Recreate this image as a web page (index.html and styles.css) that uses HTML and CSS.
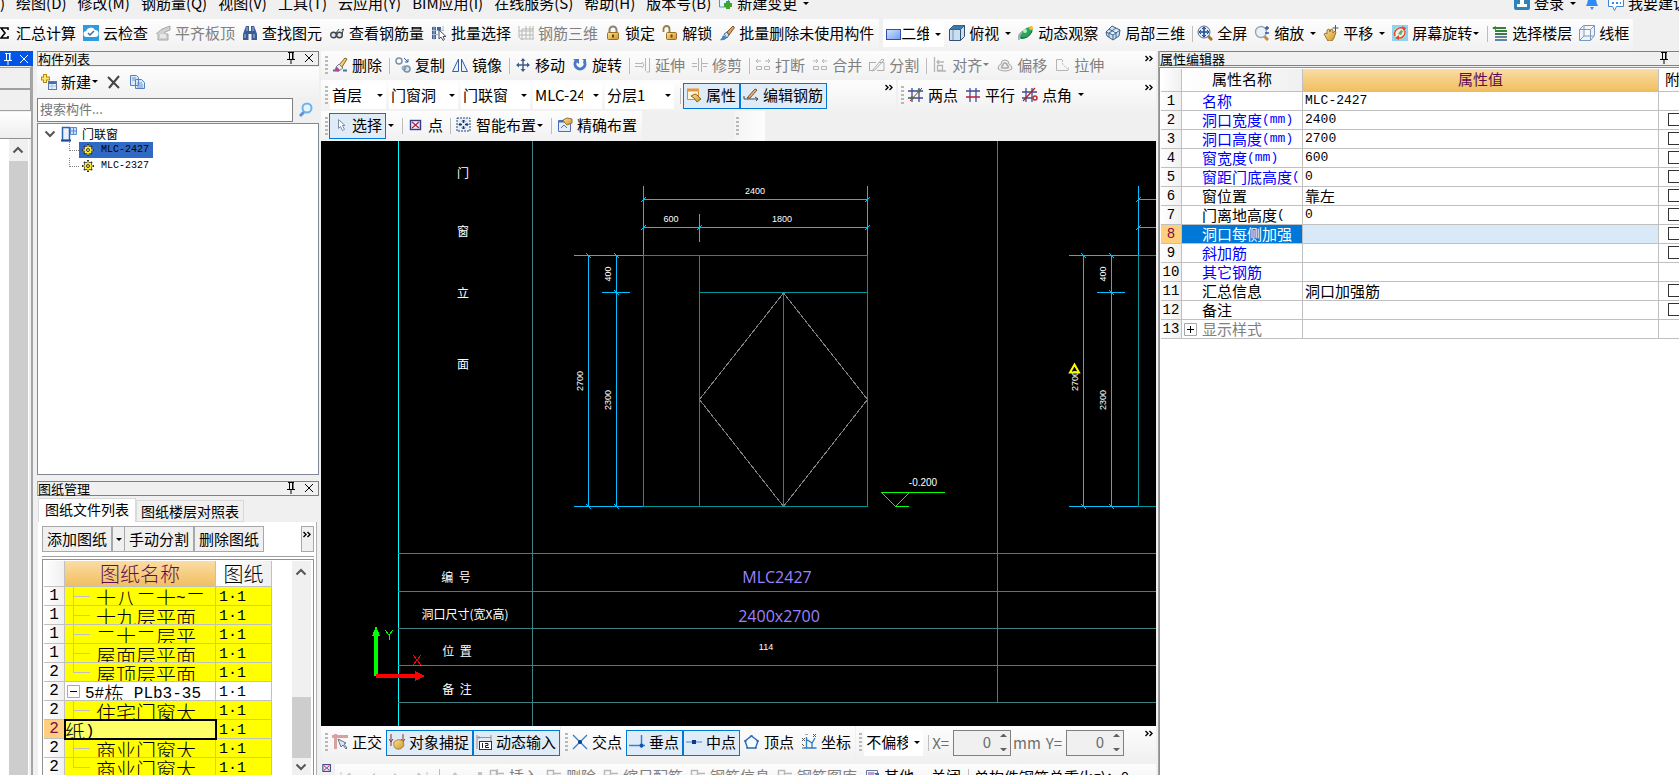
FILE: index.html
```html
<!DOCTYPE html>
<html lang="zh-CN">
<head>
<meta charset="utf-8">
<title>钢筋算量</title>
<link rel="stylesheet" href="styles.css">
</head>
<body>
<svg class="defs" aria-hidden="true">
  <defs>
    <linearGradient id="gb" x1="0" y1="0" x2="1" y2="1"><stop offset="0" stop-color="#d4e4ff"/><stop offset="1" stop-color="#6f9cf0"/></linearGradient>
    <linearGradient id="gg" x1="0" y1="0" x2="1" y2="1"><stop offset="0" stop-color="#fbe49a"/><stop offset="1" stop-color="#cf9326"/></linearGradient>
  </defs>
  <symbol id="newdoc" viewBox="0 0 16 16"><path d="M2.500-1v13h9v-13" fill="#e8f5ff" stroke="#3f9ad6"/><path d="M11 6v8M7 10h8" stroke="#3da52c" stroke-width="4"/></symbol>
  <symbol id="user" viewBox="0 0 16 16"><rect width="16" height="15" rx="2" fill="#2d83b8"/><path d="M3 12V9h3V3h4v6h3v3z" fill="#fff"/></symbol>
  <symbol id="bell" viewBox="0 0 16 16"><path d="M2 11q2-3 2-8h8q0 5 2 8z" fill="#2d8cf5"/><path d="M6 12h4l-2 3z" fill="#2d8cf5"/></symbol>
  <symbol id="bubble" viewBox="0 0 16 16"><path d="M.5 0v11.500h4l2 4 2-4h7V0" fill="#fff" stroke="#3b87e0"/><path d="M4 8h2M8 8h2M12 8h1" stroke="#3b87e0" stroke-width="2"/></symbol>
  <symbol id="sigma" viewBox="0 0 16 16"><path d="M12 5V3H5l4 5-4 5h7v-2" fill="none" stroke="#000" stroke-width="1.600"/></symbol>
  <symbol id="cloud" viewBox="0 0 16 16"><rect width="16" height="16" fill="#2d9be0"/><path d="M4 12a3 3 0 0 1-1-6 5 5 0 0 1 9-1 3.500 3.500 0 0 1 0 7z" fill="#fff"/><path d="M5 8l2 2 4-4" fill="none" stroke="#3472a8" stroke-width="1.500"/></symbol>
  <symbol id="slab" viewBox="0 0 16 16"><path d="M1 9l6-5 8-3v4l-5 2v2h3v6H3V9" fill="#d0d0d0" stroke="#a8a8a8"/><path d="M5 10h6M5 12h6" stroke="#fff"/></symbol>
  <symbol id="bino" viewBox="0 0 16 16"><path d="M4 1h3v5h2V1h3l3 8v6H9.500V9h-3v6H1V9z" fill="#3b5c93"/><path d="M3 9v4M12 9v4M5 2v4M11 2v4" stroke="#a9c3ea"/></symbol>
  <symbol id="glasses" viewBox="0 0 16 16"><circle cx="4.500" cy="10" r="2.800" fill="#dce6ee" stroke="#444" stroke-width="1.400"/><circle cx="10.500" cy="10" r="2.800" fill="#dce6ee" stroke="#444" stroke-width="1.400"/><path d="M7 8l3-4M13 9l1.500-5-2 1" fill="none" stroke="#444"/></symbol>
  <symbol id="batch" viewBox="0 0 16 16"><path d="M1 2h4v12H1zM6 2h4v3H6z" fill="#47618f"/><path d="M1 5.500h12M1 9.500h6M12 1v4M3 1v14" stroke="#a8b8d0" fill="none"/><path d="M8 5v9l2-2 2 3.500 1.500-1-1.500-3h3z" fill="#fff" stroke="#40536e"/></symbol>
  <symbol id="mesh" viewBox="0 0 16 16"><path d="M1 1v11l3 3V4h12M1 6h14M1 10h14M4 14h12M8 1v13M12 1v13M15 1v13" fill="none" stroke="#b7b7b7"/></symbol>
  <symbol id="lock" viewBox="0 0 16 16"><path d="M4.500 8V5a3.500 3.500 0 0 1 7 0v3" fill="none" stroke="#8b8371" stroke-width="2"/><rect x="2.500" y="7.500" width="11" height="7" rx="1" fill="url(#gg)" stroke="#9c6d1c"/><path d="M8 9.500v3" stroke="#6d4508" stroke-width="2"/></symbol>
  <symbol id="unlock" viewBox="0 0 16 16"><path d="M1.500 7V4a3 3 0 0 1 6 0v4" fill="none" stroke="#9c7b42" stroke-width="1.800"/><rect x="4.500" y="7.500" width="10" height="7" rx="1" fill="url(#gg)" stroke="#9c6d1c"/><path d="M9.500 9.500v3" stroke="#6d4508" stroke-width="2"/></symbol>
  <symbol id="brush" viewBox="0 0 16 16"><path d="M1 13.500h6M11 13.500h4" stroke="#4d6f9a" stroke-width="2"/><path d="M7 8l6-7 2 1-5 8z" fill="#f0d070" stroke="#86631c"/><path d="M4 10l3-3 4 4-4 3z" fill="#e8eef8" stroke="#6d7ca0"/><path d="M3 11l2-1 3 3-2 1.500q-3 0-3-3.500" fill="#b04a80"/></symbol>
  <symbol id="brushb" viewBox="0 0 16 16"><path d="M1 15q2-1 3-5l4 3q-3 3-7 2" fill="#3f83c8"/><path d="M5 9l3-2 2 3-2 3z" fill="#cfe0f4" stroke="#49719d"/><path d="M8 7l6-6 1.500 1.500L10 10z" fill="#dca060" stroke="#80522a"/></symbol>
  <symbol id="rect" viewBox="0 0 16 16"><rect x=".5" y="3.500" width="14" height="10" fill="url(#gb)" stroke="#2a52a8"/></symbol>
  <symbol id="cube" viewBox="0 0 16 16"><path d="M.5 4.500l4-4h11v11l-4 4H.5z" fill="#c9dff0" stroke="#31506f"/><path d="M.5 4.500h11v11M11.500 4.500l4-4" fill="none" stroke="#31506f"/><path d="M1 4.500l4-4h10l-4 4z" fill="#3f77a8"/><path d="M4 5v10" stroke="#6c93b5"/></symbol>
  <symbol id="orbit" viewBox="0 0 16 16"><ellipse cx="8" cy="8" rx="8" ry="4" transform="rotate(-40 8 8)" fill="#2da35b"/><path d="M1 15q-1-5 3-8" fill="none" stroke="#a8adb8" stroke-width="2"/><path d="M3 13q8 1 11-7" fill="none" stroke="#135e31"/><circle cx="13" cy="3" r="2" fill="#f4b938"/><circle cx="7" cy="6" r="2" fill="#b5efc5"/></symbol>
  <symbol id="part3d" viewBox="0 0 16 16"><path d="M1 7l6-6 8 4-1 6-6 4-6-4zM1 7l7 3 7-5M8 10v5M4 4l7 4M11 3L4 8v4M11 8v5" fill="#cbe0f2" stroke="#38658f"/></symbol>
  <symbol id="full" viewBox="0 0 16 16"><path d="M11 11l4 4" stroke="#a56e2d" stroke-width="3"/><circle cx="7" cy="7" r="6" fill="#d9e9fa" stroke="#5c6e8a"/><path d="M7 2v10M2 7h10" stroke="#224a91" stroke-width="1.600"/><path d="M5 4l2-2 2 2M5 10l2 2 2-2M4 5L2 7l2 2M10 5l2 2-2 2" fill="none" stroke="#224a91"/></symbol>
  <symbol id="zoomi" viewBox="0 0 16 16"><path d="M10 11l4 4" stroke="#c98a3b" stroke-width="3"/><circle cx="7" cy="7" r="5.500" fill="#eaf2f8" stroke="#9aa6b5" stroke-width="1.400"/><path d="M13 1v4M11 3h4M11 8h4" stroke="#2d55a0" stroke-width="1.300"/></symbol>
  <symbol id="hand" viewBox="0 0 16 16"><path d="M1 9l2-1 1 1 0-4 2-1 1 3 1-3 2 1 0 3 2-2 1 1-2 6-2 3H5z" fill="url(#gg)" stroke="#9b7430"/><path d="M12.500 0v6M9.500 3h6" stroke="#555"/></symbol>
  <symbol id="rot" viewBox="0 0 16 16"><rect width="16" height="16" fill="#8fd3ee"/><circle cx="8" cy="8" r="6" fill="#e6f4ea"/><path d="M3 11a6 6 0 0 1 9-7M13 6a6 6 0 0 1-7 7" fill="none" stroke="#e8442c" stroke-width="1.500"/><path d="M10 1l4 2-2 4zM7 10v5l-4-2z" fill="#e8442c"/><path d="M6 9l3-4 2 1-2 4z" fill="#66ae55"/></symbol>
  <symbol id="floors" viewBox="0 0 16 16"><path d="M1 3h13M3 6h12M3 9h12" stroke="#36813b" stroke-width="2"/><path d="M3 12h12M3 15h12" stroke="#355c89" stroke-width="1.500"/><path d="M0 3l4-2v4z" fill="#36813b"/></symbol>
  <symbol id="wire" viewBox="0 0 16 16"><path d="M.5 4.500l4-4h11v10l-4 5H.5zM.5 4.500h11l4-4M11.500 4.500v11M5 1v10h10M5 11l-4 4" fill="#edf3fb" stroke="#7c98ba"/></symbol>
  <symbol id="newc" viewBox="0 0 16 16"><path d="M4 0v9M0 4.500h9" stroke="#b38b1c" stroke-width="4"/><path d="M4 1v7M1 4.500h7" stroke="#ffe46a" stroke-width="2"/><rect x="7.500" y="7.500" width="8" height="8" fill="#e7f0fb" stroke="#5b78a8"/><path d="M8 9h7" stroke="#3d6fb5" stroke-width="2"/><path d="M8 12h7M11 10v5" stroke="#a8c0e0"/></symbol>
  <symbol id="del" viewBox="0 0 16 16"><path d="M2 3l11 11M13 2L3 14" stroke="#444" stroke-width="2"/></symbol>
  <symbol id="copy2" viewBox="0 0 16 16"><path d="M1.500 1.500h6l2 2v8h-8zM6.500 5.500h6l3 3v6h-9z" fill="#dbe9fb" stroke="#5580bd"/><path d="M3 4h4M3 6h3M8 9h5M8 11h6M8 13h6" stroke="#6e96cc"/></symbol>
  <symbol id="search" viewBox="0 0 16 16"><path d="M6 10l-4 4" stroke="#5b93d6" stroke-width="3"/><circle cx="9" cy="6" r="4.500" fill="#e5f4ff" stroke="#69b4ee" stroke-width="2"/></symbol>
  <symbol id="door" viewBox="0 0 16 16"><rect x="1.500" y="1.500" width="7" height="13" fill="#e9f1ff" stroke="#2f62b0" stroke-width="1.500"/><path d="M9.500 1.500h6v7h-6zM12.500 1v8M9 5h7" fill="#cfe0ff" stroke="#5b8ad0"/><path d="M0 14.500h10" stroke="#1b4a99" stroke-width="2"/></symbol>
  <symbol id="gear" viewBox="0 0 16 16"><path d="M8 2v12M2 8h12M4 4l8 8M12 4l-8 8" stroke="#333" stroke-width="2"/><circle cx="8" cy="8" r="4" fill="#ffef2e" stroke="#555"/><path d="M8 3v10M3 8h10M5 5l6 6M11 5l-6 6" stroke="#ffef2e"/><circle cx="8" cy="8" r="1.500" fill="#ffef2e" stroke="#333"/></symbol>
  <symbol id="pin" viewBox="0 0 16 16"><path d="M5 2.500h6M6.500 2v7M9.500 2v7M4 9.500h8M8 10v4M10 3v6" fill="none" stroke="currentColor"/></symbol>
  <symbol id="close" viewBox="0 0 16 16"><path d="M4 4l8 8M12 4l-8 8" stroke="currentColor"/></symbol>
  <symbol id="copyi" viewBox="0 0 16 16"><circle cx="4" cy="4" r="3" fill="none" stroke="#7a91a6" stroke-width="1.500"/><circle cx="12" cy="12" r="3" fill="#dce5ee" stroke="#7a91a6" stroke-width="1.500"/><path d="M9 1l4 4m0-3v3h-3" fill="none" stroke="#2a5ca8"/><circle cx="9" cy="11" r="2" fill="none" stroke="#7a91a6"/></symbol>
  <symbol id="mirror" viewBox="0 0 16 16"><path d="M6.500 2v12.500H.5zM9.500 2v12.500h6z" fill="#e8f0fb" stroke="#3560a5"/></symbol>
  <symbol id="move" viewBox="0 0 16 16"><path d="M8 2v12M2 8h12" stroke="#3e5f88" stroke-width="1.500"/><path d="M5.500 4l2.500-3L10.500 4zM5.500 12l2.500 3 2.500-3zM4 5.500L1 8l3 2.500zM12 5.500l3 2.500-3 2.500z" fill="#3e5f88"/></symbol>
  <symbol id="rotate" viewBox="0 0 16 16"><path d="M4 4a5 5 0 1 0 8 0" fill="none" stroke="#4878c8" stroke-width="3"/><path d="M1 2h6v5zM10 2h4v4z" fill="#4878c8"/></symbol>
  <symbol id="extend" viewBox="0 0 16 16"><path d="M0 6.500h7M0 9.500h7M10.500 1v13M14.500 1v14h-3M7 5l2 3-2 3" fill="none" stroke="#b5b5b5"/></symbol>
  <symbol id="trim" viewBox="0 0 16 16"><path d="M0 6.500h5M0 9.500h5M6.500 1v13M9.500 1v14M10 6.500h6M11 9.500h4" fill="none" stroke="#b5b5b5"/></symbol>
  <symbol id="brk" viewBox="0 0 16 16"><path d="M1 4h5M10 4h5M3 2L1 4l2 2M13 2l2 2-2 2M1.500 9.500h5v3h-5zM9.500 9.500h5v3h-5z" fill="none" stroke="#b5b5b5"/></symbol>
  <symbol id="merge" viewBox="0 0 16 16"><path d="M1 4h5M10 4h5M4 2l2 2-2 2M12 2l-2 2 2 2M1.500 9.500h5v3h-5zM9.500 9.500h5v3h-5z" fill="none" stroke="#b5b5b5"/></symbol>
  <symbol id="split" viewBox="0 0 16 16"><path d="M0 5.500h7M10 5.500h5v8H8M0 13.500h5M3 14L13 2l2 1-9 10zM.5 6v7" fill="none" stroke="#adadad"/></symbol>
  <symbol id="align" viewBox="0 0 16 16"><path d="M2.500 0v15M5 5h7M7 3L5 5l2 2M5.500 8.500h5v5h-5zM5 14h9" fill="none" stroke="#b5b5b5" stroke-width="1.300"/></symbol>
  <symbol id="offset" viewBox="0 0 16 16"><path d="M4 7a4 4 0 0 1 8 0q3 1 3 5-3 2-7 2t-7-2q0-4 3-5z" fill="#eee" stroke="#a8a8a8"/><path d="M6 8a2 2 0 0 1 4 0q2 1 1 3H5q-1-2 1-3z" fill="none" stroke="#a8a8a8" stroke-width="1.400"/></symbol>
  <symbol id="stretch" viewBox="0 0 16 16"><path d="M8 2.500H2.500v11H14" fill="none" stroke="#b5b5b5"/><path d="M8.500 3v4l6 6v-3" fill="none" stroke="#b5b5b5" stroke-dasharray="2 1"/></symbol>
  <symbol id="prop" viewBox="0 0 16 16"><path d="M1.500 2.500h11v10h-11z" fill="#fff6dc" stroke="#d9912e"/><path d="M1 3h12" stroke="#e8963a" stroke-width="3"/><path d="M5 9l4-2 2 1 4 4-4 3-3-4z" fill="url(#gg)" stroke="#8a6520"/></symbol>
  <symbol id="rebar" viewBox="0 0 16 16"><path d="M1 9v3h14M12 10l3 2-2 2" fill="none" stroke="#444"/><path d="M4 11l8-9 2 1-7 8z" fill="#eab77b" stroke="#7b4d2a"/></symbol>
  <symbol id="ax2" viewBox="0 0 16 16"><path d="M0 4h15M0 11h15M4 1v14M11 1v14" stroke="#3c4d96" stroke-width="1.300"/><path d="M2 14L14 1" stroke="#b32424"/><circle cx="11" cy="4" r="1.700" fill="#477b3a"/><circle cx="4" cy="11" r="1.700" fill="#477b3a"/></symbol>
  <symbol id="ax1" viewBox="0 0 16 16"><path d="M1 4h14M5 1v14M11 1v14" stroke="#3c4d96" stroke-width="1.300"/><path d="M1 10h14" stroke="#c02a3e" stroke-width="1.600"/></symbol>
  <symbol id="ax3" viewBox="0 0 16 16"><path d="M0 5h15M0 11h10M4 1v14M10 1v14" stroke="#3c4d96" stroke-width="1.300"/><path d="M1 14L13 1" stroke="#b32424" stroke-width="1.300"/><circle cx="13" cy="11" r="2" fill="none" stroke="#c02a2a" stroke-width="1.500"/></symbol>
  <symbol id="cursor" viewBox="0 0 16 16"><path d="M6.500 2.500v9l2-2 2 4 2-1-2-4h2.500z" fill="#fff" stroke="#7d8faa"/></symbol>
  <symbol id="pt" viewBox="0 0 16 16"><rect x="2.500" y="3.500" width="10" height="9" fill="#eef" stroke="#2c3f86" stroke-width="1.400"/><path d="M4 5l7 6M11 5l-7 6" stroke="#b3243a" stroke-width="1.300"/></symbol>
  <symbol id="smart" viewBox="0 0 16 16"><rect x="1" y="1" width="13" height="13" fill="#e4effc" stroke="#30456e" stroke-dasharray="2 1"/><path d="M7.500 3v3M7.500 9v3M3 7.500h3M9 7.500h3" stroke="#213662" stroke-width="1.500"/><path d="M6 4.500L7.500 3 9 4.500M6 10.500L7.500 12 9 10.500M4.500 6L3 7.500 4.500 9M10.500 6L12 7.500 10.500 9" fill="none" stroke="#213662"/></symbol>
  <symbol id="exact" viewBox="0 0 16 16"><path d="M1.500 3.500h12v11h-12z" fill="#e4eefc" stroke="#4b6ebc"/><path d="M2 4.500h11" stroke="#4b6ebc" stroke-width="2"/><path d="M4 11l3-3 3 3" fill="none" stroke="#4b6ebc"/><path d="M6 3l4-2 5 1v4l-5 2-3-3z" fill="url(#gg)" stroke="#927134"/></symbol>
  <symbol id="ortho" viewBox="0 0 16 16"><path d="M0 2.500h16M3.500 0v15" stroke="#d9a0a0" stroke-width="3"/><path d="M6 5l3 8 2-2 3 4 1-1-3-4 2-1z" fill="#dfe8f2" stroke="#60748e"/></symbol>
  <symbol id="snap" viewBox="0 0 16 16"><path d="M2 0v12M14 0v10M0 5l2 3 2-3M12 5l2 3 2-3" fill="none" stroke="#8c2f2f"/><path d="M5 8q4-4 9-1l1 4q-2 5-7 4-4-1-3-7" fill="url(#gg)" stroke="#b4822e"/></symbol>
  <symbol id="dyn" viewBox="0 0 16 16"><path d="M1 1v14M15 1v6M1 3.500h14M3 2v3" stroke="#a88" fill="none"/><rect x="3.500" y="7.500" width="12" height="8" fill="#fff" stroke="#333"/><path d="M6.500 9v5M9 9.500h3v2H9.500v2H13" fill="none" stroke="#222"/></symbol>
  <symbol id="inter" viewBox="0 0 16 16"><path d="M1 1l14 14M15 1L1 15" stroke="#3a7fd0" stroke-width="1.400"/><circle cx="8" cy="8" r="2" fill="#0d3a86"/></symbol>
  <symbol id="perp" viewBox="0 0 16 16"><path d="M0 11.500h16M12.500 1v13" stroke="#3a7fd0" stroke-width="1.500"/><circle cx="12.500" cy="11.500" r="2" fill="#1555ae"/></symbol>
  <symbol id="mid" viewBox="0 0 16 16"><path d="M0 8h16" stroke="#77a6dd" stroke-width="1.500"/><rect x="6" y="6" width="4" height="4" fill="#0d3a86"/></symbol>
  <symbol id="vertex" viewBox="0 0 16 16"><path d="M7.500 2L14 7l-2.500 7h-8L1 7z" fill="#f5faff" stroke="#2c67b5" stroke-width="1.400"/><path d="M6 2h3M0 7h3M12 7h3M3 13v2M12 13v2" stroke="#2c67b5"/></symbol>
  <symbol id="coord" viewBox="0 0 16 16"><path d="M5.500 3v11h10M3 14h2M5 5l6 4 3-5M11 9v5" fill="none" stroke="#2c7bc5" stroke-width="1.300"/><path d="M1 4l3 3M4 4L1 7M1 10l2 2M12 0l3 3M15 0l-3 3M4 0h3M1 14h2" stroke="#555"/></symbol>
  <symbol id="grey" viewBox="0 0 16 16"><path d="M1.500 2.500h6v5h-6zM8 5.500h7M10 8v7M5 9.500h10" fill="none" stroke="#b8b8b8" stroke-width="1.500"/></symbol>
  <symbol id="other" viewBox="0 0 16 16"><path d="M2.500 2.500h11v12h-11z" fill="#edf4ff" stroke="#657b99"/><path d="M4 5h6M4 7h6" stroke="#84a"/><path d="M10 5h5v5z" fill="#3567b0"/></symbol>
  <symbol id="nav1" viewBox="0 0 16 16"><path d="M2 3v12M11 4v11L4 9z" fill="#c4c4c4" stroke="#c4c4c4"/></symbol>
  <symbol id="nav2" viewBox="0 0 16 16"><path d="M11 4v11L4 9z" fill="#c4c4c4"/></symbol>
  <symbol id="nav3" viewBox="0 0 16 16"><path d="M5 4v11l7-6z" fill="#c4c4c4"/></symbol>
  <symbol id="nav4" viewBox="0 0 16 16"><path d="M13 3v12M4 4v11l7-6z" fill="#c4c4c4" stroke="#c4c4c4"/></symbol>
  <symbol id="nav5" viewBox="0 0 16 16"><path d="M8 3l5 6H3z" fill="#c4c4c4"/></symbol>
  <symbol id="nav6" viewBox="0 0 16 16"><path d="M8 3v9" stroke="#c4c4c4" stroke-width="4"/></symbol>
  <symbol id="chev" viewBox="0 0 16 16"><path d="M3.500 10.500L8 6l4.500 4.500" fill="none" stroke="#555" stroke-width="2"/></symbol>
  <symbol id="branch" viewBox="0 0 26 18"><path d="M8.500 0v18M9 9.500h16" fill="none" stroke="#c0c0c0"/></symbol>
  <symbol id="branche" viewBox="0 0 26 18"><path d="M8.500 0v10M9 9.500h16" fill="none" stroke="#c0c0c0"/></symbol>
  <symbol id="plus" viewBox="0 0 14 14"><path d="M.5.5h12v12H.5z" fill="#fff" stroke="#a8a8a8"/><path d="M3 6.500h7M6.500 3v7" stroke="#000"/></symbol>
  <symbol id="minus" viewBox="0 0 14 14"><path d="M.5.5h12v12H.5z" fill="#fff" stroke="#a8a8a8"/><path d="M3 6.500h7" stroke="#000"/></symbol>
  <symbol id="more" viewBox="0 0 10 8"><path d="M1.500 1l2.500 2.500L1.500 6M5.500 1L8 3.500 5.500 6" fill="none" stroke="#000" stroke-width="1.400"/></symbol>
</svg>

<div class="app">
  <header class="menubar">
    <nav class="menus">
      <button class="cut">)</button><button>绘图(D)</button><button>修改(M)</button><button>钢筋量(Q)</button><button>视图(V)</button><button>工具(T)</button><button>云应用(Y)</button><button>BIM应用(I)</button><button>在线服务(S)</button><button>帮助(H)</button><button>版本号(B)</button>
      <button class="change"><svg><use href="#newdoc"/></svg>新建变更<i class="dd wide"></i></button>
    </nav>
    <div class="account">
      <button><svg><use href="#user"/></svg>登录<i class="dd wide"></i></button>
      <button aria-label="通知"><svg><use href="#bell"/></svg></button>
      <button><svg><use href="#bubble"/></svg>我要建议</button>
    </div>
  </header>

  <div class="mainbar">
    <div class="bar first">
      <button><svg><use href="#sigma"/></svg>汇总计算</button>
      <button><svg><use href="#cloud"/></svg>云检查</button>
      <button disabled><svg><use href="#slab"/></svg>平齐板顶</button>
      <button><svg><use href="#bino"/></svg>查找图元</button>
      <button><svg><use href="#glasses"/></svg>查看钢筋量</button>
      <button><svg><use href="#batch"/></svg>批量选择</button>
      <button disabled><svg><use href="#mesh"/></svg>钢筋三维</button>
      <button><svg><use href="#lock"/></svg>锁定</button>
      <button><svg><use href="#unlock"/></svg>解锁</button>
      <button><svg><use href="#brushb"/></svg>批量删除未使用构件</button>
    </div>
    <div class="bar views">
      <label class="combo viewmode"><svg><use href="#rect"/></svg><select aria-label="视图模式"><option>二维</option></select></label>
      <button><svg><use href="#cube"/></svg>俯视<i class="dd wide"></i></button>
      <button><svg><use href="#orbit"/></svg>动态观察</button>
      <button><svg><use href="#part3d"/></svg>局部三维</button>
      <i class="sep"></i>
      <button><svg><use href="#full"/></svg>全屏</button>
      <button><svg><use href="#zoomi"/></svg>缩放<i class="dd wide"></i></button>
      <button><svg><use href="#hand"/></svg>平移<i class="dd wide"></i></button>
      <button><svg><use href="#rot"/></svg>屏幕旋转<i class="dd"></i></button>
      <i class="sep"></i>
      <button><svg><use href="#floors"/></svg>选择楼层</button>
      <button><svg><use href="#wire"/></svg>线框</button>
    </div>
  </div>

  <main class="work">
    <aside class="strip">
      <div class="striphead"><svg><use href="#pin"/></svg><svg><use href="#close"/></svg></div>
      <div class="stripbox"></div><div class="stripbox"></div><div class="striptool"></div>
      <div class="striplist"><div class="vscroll tall"><svg><use href="#chev"/></svg><div class="thumb"></div></div></div>
    </aside>

    <aside class="side">
      <section class="components">
        <h2 class="panelhead"><span>构件列表</span><svg><use href="#pin"/></svg><svg><use href="#close"/></svg></h2>
        <div class="bar minor">
          <button><svg><use href="#newc"/></svg>新建<i class="dd"></i></button>
          <button aria-label="删除"><svg><use href="#del"/></svg></button>
          <button aria-label="复制"><svg><use href="#copy2"/></svg></button>
        </div>
        <div class="find"><input type="text" aria-label="搜索构件" placeholder="搜索构件..."><button aria-label="搜索"><svg><use href="#search"/></svg></button></div>
        <ul class="tree">
          <li><div class="node root"><svg class="down"><use href="#chev"/></svg><svg><use href="#door"/></svg><span>门联窗</span></div>
            <ul>
              <li class="node leaf"><span class="pick sel"><svg><use href="#gear"/></svg>MLC-2427</span></li>
              <li class="node leaf"><span class="pick"><svg><use href="#gear"/></svg>MLC-2327</span></li>
            </ul>
          </li>
        </ul>
      </section>

      <section class="drawings">
        <h2 class="panelhead"><span>图纸管理</span><svg><use href="#pin"/></svg><svg><use href="#close"/></svg></h2>
        <div class="tabs"><button class="on">图纸文件列表</button><button>图纸楼层对照表</button></div>
        <div class="tabpage">
          <div class="drawbar"><button>添加图纸</button><button aria-label="更多" class="narrow"><i class="dd"></i></button><button>手动分割</button><button>删除图纸</button><button aria-label="展开" class="expand"><svg class="more"><use href="#more"/></svg></button></div>
          <div class="sheetbox">
            <table class="sheets">
              <thead><tr><th class="no"></th><th class="hot">图纸名称</th><th class="ratio">图纸</th></tr></thead>
              <tbody>
                <tr><th>1</th><td><div><svg class="br"><use href="#branch"/></svg>十八二十<b>~</b>二</div></td><td><div>1·1</div></td></tr>
                <tr><th>1</th><td><div><svg class="br"><use href="#branch"/></svg>十九层平面</div></td><td><div>1·1</div></td></tr>
                <tr><th>1</th><td><div><svg class="br"><use href="#branch"/></svg>二十二层平</div></td><td><div>1·1</div></td></tr>
                <tr><th>1</th><td><div><svg class="br"><use href="#branch"/></svg>屋面层平面</div></td><td><div>1·1</div></td></tr>
                <tr><th>2</th><td><div><svg class="br"><use href="#branche"/></svg>屋顶层平面</div></td><td><div>1·1</div></td></tr>
                <tr class="plain"><th>2</th><td><div><svg class="box"><use href="#minus"/></svg><b>5#</b>栋<b> PLb3-35</b></div></td><td><div>1·1</div></td></tr>
                <tr><th>2</th><td><div><svg class="br"><use href="#branch"/></svg>住宅门窗大</div></td><td><div>1·1</div></td></tr>
                <tr class="cur"><th>2</th><td class="edit"><div>纸<b>)</b></div></td><td><div>1·1</div></td></tr>
                <tr><th>2</th><td><div><svg class="br"><use href="#branch"/></svg>商业门窗大</div></td><td><div>1·1</div></td></tr>
                <tr><th>2</th><td><div><svg class="br"><use href="#branche"/></svg>商业门窗大</div></td><td><div>1·1</div></td></tr>
              </tbody>
            </table>
            <div class="vscroll"><svg><use href="#chev"/></svg><div class="track"><div class="thumb"></div></div><svg class="down"><use href="#chev"/></svg></div>
          </div>
        </div>
      </section>
    </aside>

    <section class="center">
      <div class="bar modify">
        <i class="grip"></i>
        <button><svg><use href="#brush"/></svg>删除</button><i class="sep"></i>
        <button><svg><use href="#copyi"/></svg>复制</button>
        <button><svg><use href="#mirror"/></svg>镜像</button><i class="sep"></i>
        <button><svg><use href="#move"/></svg>移动</button>
        <button><svg><use href="#rotate"/></svg>旋转</button><i class="sep"></i>
        <button disabled><svg><use href="#extend"/></svg>延伸</button>
        <button disabled><svg><use href="#trim"/></svg>修剪</button><i class="sep"></i>
        <button disabled><svg><use href="#brk"/></svg>打断</button>
        <button disabled><svg><use href="#merge"/></svg>合并</button>
        <button disabled><svg><use href="#split"/></svg>分割</button><i class="sep"></i>
        <button disabled><svg><use href="#align"/></svg>对齐<i class="dd"></i></button>
        <button disabled><svg><use href="#offset"/></svg>偏移</button>
        <button disabled><svg><use href="#stretch"/></svg>拉伸</button>
        <svg class="more"><use href="#more"/></svg>
      </div>

      <div class="row">
        <div class="bar combos">
          <i class="grip"></i>
          <label class="combo short"><select aria-label="楼层"><option>首层</option></select></label>
          <label class="combo"><select aria-label="构件类别"><option>门窗洞</option></select></label>
          <label class="combo"><select aria-label="构件类型"><option>门联窗</option></select></label>
          <label class="combo"><select aria-label="构件"><option>MLC-2427</option></select></label>
          <label class="combo"><select aria-label="分层"><option>分层1</option></select></label>
          <i class="sep"></i>
          <div class="group"><button class="tog"><svg><use href="#prop"/></svg>属性</button><button class="tog"><svg><use href="#rebar"/></svg>编辑钢筋</button></div>
          <svg class="more"><use href="#more"/></svg>
        </div>
        <div class="bar axes">
          <i class="grip"></i>
          <button><svg><use href="#ax2"/></svg>两点</button>
          <button><svg><use href="#ax1"/></svg>平行</button>
          <button><svg><use href="#ax3"/></svg>点角<i class="dd wide"></i></button>
          <svg class="more"><use href="#more"/></svg>
        </div>
      </div>

      <div class="row low">
        <div class="bar draw">
          <i class="grip"></i>
          <div class="group"><button class="tog"><svg><use href="#cursor"/></svg>选择</button><button class="ddb" aria-label="选择方式"><i class="dd"></i></button></div><i class="sep"></i>
          <button><svg><use href="#pt"/></svg>点</button><i class="sep"></i>
          <button><svg><use href="#smart"/></svg>智能布置<i class="dd"></i></button><i class="sep"></i>
          <button><svg><use href="#exact"/></svg>精确布置</button>
        </div>
        <div class="bar stub"><i class="grip"></i></div>
      </div>

      <svg class="cad" role="img" aria-label="门窗立面图">
        <g class="frame">
          <path class="edge" d="M77.500 0v600"/>
          <path d="M211.500 0v600M676.500 0v561M77 412.500h900M77 450.500h900M77 487.500h900M77 524.500h900M77 561.500h900"/>
        </g>
        <g id="elev">
          <path class="wall" d="M322 114.500h225M322.500 114v251M322 365.500h225M378.500 114v251M546.500 114v251M378 151.500h168M462.500 151v214"/>
          <path class="swing" d="M462.500 152L378.500 258.500 462.500 365.500 546.500 258.500z"/>
          <path class="dims" d="M322.500 45v69M546.500 45v69M322 58.500h224M322 86.500h224M378.500 73v28M253 114.500h69M253 365.500h69M267.500 114v251M295.500 114v251M281 151.500h28"/>
          <path class="dims" d="M320 61l5-5M320 89l5-5M376 89l5-5M544 61l5-5M544 89l5-5M265 112l5 5M293 112l5 5M293 149l5 5M265 363l5 5M293 363l5 5"/>
          <g class="num"><text x="434" y="53">2400</text><text x="350" y="81">600</text><text x="461" y="81">1800</text>
          <text transform="translate(262 240) rotate(-90)">2700</text><text transform="translate(290 259) rotate(-90)">2300</text><text transform="translate(290 133) rotate(-90)">400</text></g>
        </g>
        <use href="#elev" x="495"/>
        <path class="mark" d="M749 231.500l4.500-8 4.500 8z"/>
        <path class="level" d="M560 351.500h64M560.500 351.500l14 14 14-14M574 365.500h14"/>
        <g class="note"><text class="lv" x="602" y="345">-0.200</text>
          <text x="142" y="37">门</text><text x="142" y="95">窗</text><text x="142" y="157">立</text><text x="142" y="228">面</text>
          <text x="135" y="441" xml:space="preserve">编  号</text><text x="144" y="478">洞口尺寸(宽X高)</text><text x="136" y="515" xml:space="preserve">位  置</text><text x="136" y="553" xml:space="preserve">备  注</text></g>
        <g class="tag"><text x="456" y="442">MLC2427</text><text x="458" y="481">2400x2700</text></g>
        <g class="num"><text x="445" y="509">114</text></g>
        <path fill="#0f0" d="M53 535V495h-2l4-10 4 10h-2v40z"/>
        <path fill="#f00" d="M55 533h39v-3l10 5-10 5v-3H55z"/>
        <path d="M64 489l4 5 4-5M68 494v5" fill="none" stroke="#0f0"/><path d="M92 514l8 10M100 514l-8 10" stroke="#f00"/>
      </svg>

      <div class="row snaps">
        <div class="bar snap">
          <i class="grip"></i>
          <button><svg><use href="#ortho"/></svg>正交</button>
          <div class="group"><button class="tog"><svg><use href="#snap"/></svg>对象捕捉</button><button class="tog"><svg><use href="#dyn"/></svg>动态输入</button></div>
        </div>
        <div class="bar snap">
          <i class="grip"></i>
          <button><svg><use href="#inter"/></svg>交点</button>
          <div class="group"><button class="tog"><svg><use href="#perp"/></svg>垂点</button><button class="tog"><svg><use href="#mid"/></svg>中点</button></div>
          <button><svg><use href="#vertex"/></svg>顶点</button>
          <button><svg><use href="#coord"/></svg>坐标</button>
        </div>
        <div class="bar shift">
          <i class="grip"></i>
          <label class="combo off"><select aria-label="偏移方式"><option>不偏移</option></select></label><i class="sep"></i>
          <label class="spin">X=<span><input type="text" value="0" disabled><i></i></span>mm</label>
          <label class="spin">Y=<span><input type="text" value="0" disabled><i></i></span></label>
          <svg class="more"><use href="#more"/></svg>
        </div>
      </div>

      <div class="row last">
        <button class="closer" aria-label="关闭面板"><svg><use href="#pt"/></svg></button>
        <div class="bar record">
          <div class="navs"><svg><use href="#nav1"/></svg><svg><use href="#nav2"/></svg><svg><use href="#nav3"/></svg><svg><use href="#nav4"/></svg><i class="sep"></i><svg><use href="#nav5"/></svg><svg><use href="#nav6"/></svg><i class="sep"></i></div>
          <button disabled><svg><use href="#grey"/></svg>插入</button>
          <button disabled><svg><use href="#grey"/></svg>删除</button>
          <button disabled><svg><use href="#grey"/></svg>缩尺配筋</button>
          <button disabled><svg><use href="#grey"/></svg>钢筋信息</button>
          <button disabled><svg><use href="#grey"/></svg>钢筋图库</button>
          <button><svg><use href="#other"/></svg>其他</button>
          <button class="shut">关闭</button><i class="sep"></i>
          <span>单构件钢筋总重(kg)：0</span>
        </div>
      </div>
    </section>

    <aside class="props">
      <h2 class="panelhead"><span>属性编辑器</span><svg><use href="#pin"/></svg></h2>
      <div class="propbox">
        <table class="ptable">
          <thead><tr><th class="no"></th><th class="name">属性名称</th><th class="hot">属性值</th><th class="att">附加</th></tr></thead>
          <tbody>
            <tr><th>1</th><td class="blue">名称</td><td><b>MLC-2427</b></td><td></td></tr>
            <tr><th>2</th><td class="blue">洞口宽度<b>(mm)</b></td><td><b>2400</b></td><td><input type="checkbox" aria-label="附加 洞口宽度"></td></tr>
            <tr><th>3</th><td class="blue">洞口高度<b>(mm)</b></td><td><b>2700</b></td><td><input type="checkbox" aria-label="附加 洞口高度"></td></tr>
            <tr><th>4</th><td class="blue">窗宽度<b>(mm)</b></td><td><b>600</b></td><td><input type="checkbox" aria-label="附加 窗宽度"></td></tr>
            <tr><th>5</th><td class="blue">窗距门底高度<b>(</b></td><td><b>0</b></td><td><input type="checkbox" aria-label="附加 窗距门底高度"></td></tr>
            <tr><th>6</th><td>窗位置</td><td>靠左</td><td><input type="checkbox" aria-label="附加 窗位置"></td></tr>
            <tr><th>7</th><td>门离地高度<b>(</b></td><td><b>0</b></td><td><input type="checkbox" aria-label="附加 门离地高度"></td></tr>
            <tr class="cursel"><th>8</th><td>洞口每侧加强</td><td></td><td><input type="checkbox" aria-label="附加 洞口每侧加强筋"></td></tr>
            <tr><th>9</th><td class="blue">斜加筋</td><td></td><td><input type="checkbox" aria-label="附加 斜加筋"></td></tr>
            <tr><th>10</th><td class="blue">其它钢筋</td><td></td><td></td></tr>
            <tr><th>11</th><td>汇总信息</td><td>洞口加强筋</td><td><input type="checkbox" aria-label="附加 汇总信息"></td></tr>
            <tr><th>12</th><td>备注</td><td></td><td><input type="checkbox" aria-label="附加 备注"></td></tr>
            <tr><th>13</th><td class="fold"><svg class="box"><use href="#plus"/></svg>显示样式</td><td></td><td></td></tr>
          </tbody>
        </table>
      </div>
    </aside>
  </main>
</div>
</body>
</html>
```
FILE: styles.css
```css
* { box-sizing: border-box; }
body { margin: 0; background: #f0f0f0; color: #000; font: 15px/20px "Noto Sans CJK SC", sans-serif; overflow: hidden; }
button, input, select { font: inherit; color: inherit; margin: 0; }
button { display: inline-flex; align-items: center; gap: 4px; padding: 0 0 2px; border: 0; background: none; white-space: nowrap; flex: none; }
button:disabled { color: #808080; }
svg { width: 16px; height: 16px; flex: none; display: block; }
.defs { position: absolute; width: 0; height: 0; }
.app { height: 100vh; display: flex; flex-direction: column; }

/* shared pieces */
.bar { display: flex; align-items: center; gap: 7px; background: linear-gradient(#fdfdfd, #f1f1f1); white-space: nowrap; }
.row { display: flex; }
.group { display: flex; }
.sep { width: 1px; height: 16px; background: #bdbdbd; margin-right: -2px; flex: none; }
.grip { width: 3px; height: 19px; flex: none; margin-right: -3px; background: repeating-linear-gradient(#b8b8b8 0 2px, transparent 2px 4px); }
.dd { display: inline-flex; width: 8px; justify-content: center; margin-left: -4px; flex: none; }
.dd::after, .combo::after { content: ""; border: 3px solid transparent; border-top-color: currentColor; border-bottom: 0; }
.dd.wide { width: 12px; justify-content: flex-end; }
.tog { height: 26px; padding: 0 3px 2px 2px; border: 1px solid #0078d7; background: #dfebf7; }
.more { width: 10px; height: 8px; align-self: flex-start; margin: 4px 2px 0 auto; }
.combo { display: flex; align-items: center; width: 69px; height: 26px; background: #fff; flex: none; }
.combo select { appearance: none; border: 0; outline: 0; background: none; padding: 0 0 2px 2px; flex: 1; min-width: 0; height: 24px; }
.combo::after { box-sizing: content-box; margin: 0 3px 0 10px; }
.combo.short { width: 56px; }

.menubar { height: 19px; overflow: hidden; display: flex; justify-content: space-between; }
.menus, .account { display: flex; gap: 11px; margin-top: -6px; height: 20px; }
.menus .change { margin-left: -5px; }
.account { gap: 8px; width: 165px; }

.mainbar { height: 32px; display: flex; gap: 4px; }
.mainbar .bar { padding-bottom: 2px; }
.mainbar .first { margin-left: -4px; padding-right: 5px; }
.mainbar .views { padding-right: 4px; }
.views .sep { margin-right: -3px; }
.viewmode { width: 61px; margin-right: -2px; padding-left: 3px; }
.viewmode select { padding-left: 0; margin-left: -1px; }
.viewmode::after { margin-left: 6px; }

.work { flex: 1; min-height: 0; display: flex; }

/* far left strip */
.strip { width: 33px; display: flex; flex-direction: column; border-right: 2px solid #a5a5a5; }
.striphead { height: 15px; margin-right: -2px; background: #0055e5; color: #fff; display: flex; align-items: center; justify-content: space-between; padding-right: 1px; margin-bottom: 1px; }
.stripbox { height: 22px; border: 1px solid #a0a0a0; border-left: 0; background: #f0f0f0; }
.striptool { height: 27px; border-bottom: 1px solid #909090; background: linear-gradient(#fff, #eee); margin-top: 1px; }
.striplist { flex: 1; background: #fff; padding-left: 9px; display: flex; border-right: 2px solid #f0f0f0; }
.vscroll { width: 19px; background: #f0f0f0; display: flex; flex-direction: column; align-items: stretch; }
.vscroll > svg { margin: 3px 1px 3px; flex: none; }
.thumb { background: #cdcdcd; flex: 1; }
svg.down { transform: rotate(180deg); }

/* panels */
.panelhead { margin: 0; height: 15px; font-size: 13px; font-weight: 400; line-height: 13px; display: flex; align-items: center; gap: 2px; border: 1px solid #808080; border-left-color: #a8a8a8; padding: 0 1px 1px 0; background: #f0f0f0; }
.panelhead span { flex: 1; }
.side { width: 282px; margin-left: 4px; display: flex; flex-direction: column; }
.components { flex: 1; display: flex; flex-direction: column; min-height: 0; }
.minor { height: 31px; padding-left: 4px; margin-top: 1px; }
.find { display: flex; height: 25px; }
.find input { flex: 1; min-width: 0; height: 24px; border: 1px solid #7f7f7f; background: #fff; padding: 0 2px 3px; font-size: 13px; outline: 0; }
.find input::placeholder { color: #757575; opacity: 1; }
.find button { width: 26px; justify-content: center; }
.tree { flex: 1; margin: 0; padding: 1px 0; list-style: none; border: 1px solid #808895; background: #fff; font-size: 12px; }
.tree ul { margin: 0 0 0 31px; padding: 0; list-style: none; }
.node { display: flex; align-items: center; height: 16px; }
.root { gap: 3px; padding-left: 4px; height: 17px; }
.root span { padding-left: 2px; }
.leaf::before { content: ""; width: 9px; height: 8px; align-self: flex-start; border: 1px dotted #808080; border-width: 0 0 1px 1px; }
.pick { display: flex; align-items: center; gap: 5px; height: 16px; padding: 0 4px 0 1px; font-family: "Liberation Mono", monospace; font-size: 10px; }
.sel.pick { background: #316ac5; }

.drawings { height: 294px; margin-top: 6px; display: flex; flex-direction: column; overflow: hidden; }
.tabs { display: flex; align-items: flex-end; height: 26px; padding-left: 1px; font-size: 14px; }
.tabs button { height: 22px; padding: 0 4px 1px; border: 1px solid #d9d9d9; }
.tabs .on { height: 24px; padding: 0 6px 3px; background: #fff; border-bottom: 0; }
.tabpage { flex: 1; min-height: 0; margin: 0 2px 0 1px; padding: 4px 2px 0 4px; background: #fff; border-right: 1px solid #b0b0b0; display: flex; flex-direction: column; }
.drawbar { display: flex; height: 31px; flex: none; margin-bottom: 2px; border-bottom: 1px solid #a0a0a0; }
.drawbar button { height: 26px; padding: 0 4px; border: 1px solid #a8a8a8; background: #f0f0f0; }
.drawbar .narrow { width: 13px; padding: 0; justify-content: center; margin-right: -1px; }
.drawbar .narrow .dd { margin: 0; }
.drawbar .expand { margin-left: auto; width: 13px; padding: 0; }
.drawbar .more { margin: 4px 0 0; }
.sheetbox { flex: 1; min-height: 0; display: flex; justify-content: space-between; border: 1px solid #909090; border-bottom: 0; padding: 1px 2px 0 1px; }
.sheetbox .vscroll { width: 19px; }
.track { flex: 1; display: flex; flex-direction: column; }
.track .thumb { flex: none; height: 61px; margin: auto 0 -4px; }
.sheetbox .down { margin: 5px 1px 0; }
table { border-collapse: separate; border-spacing: 0; table-layout: fixed; }
th { font-weight: 400; background: linear-gradient(90deg, #fff, #f0f0f0); }
td, th { padding: 0; border: solid #c0c0c0; border-width: 0 1px 1px 0; white-space: nowrap; overflow: hidden; }
td b { font-weight: 400; font-family: "Liberation Mono", monospace; white-space: pre; }
th.hot { background: linear-gradient(#fbdca5, #f0bf60); color: #5e0b50; }
.sheets { width: 228px; font-size: 20px; font-weight: 300; align-self: flex-start; }
.sheets .no { width: 21px; }
.sheets .ratio { width: 56px; }
.sheets thead th { height: 26px; line-height: 25px; font-weight: 300; }
.sheets tbody th { font: 16px/18px "Liberation Mono", monospace; height: 19px; }
.sheets td { background: #ff0; }
.sheets td div { height: 18px; line-height: 24px; display: flex; overflow: hidden; }
.sheets td + td div { font: 15px/22px "Liberation Mono", monospace; padding-left: 3px; }
.sheets td b { font-size: 16px; }
.sheets .plain td { background: #fff; }
.br { width: 26px; height: 18px; margin-right: 5px; }
.box { width: 14px; height: 14px; margin: 3px 4px 0 2px; }
.cur th { background: #ffcf80; color: #7b1040; }
.sheets .edit { background: #ff6; outline: 2px solid #000; outline-offset: -1px; }

/* centre */
.center { flex: 1; min-width: 0; margin-left: 2px; display: flex; flex-direction: column; border-right: 1px solid #a0a0a0; padding-right: 2px; }
.modify { height: 29px; padding-left: 4px; }
.center > .row { height: 31px; gap: 2px; }
.combos { flex: 0 0 575px; padding-left: 4px; gap: 3px; }
.combos .grip { margin-right: -1px; }
.combos .sep { margin: 0 -1px 0 3px; }
.axes { flex: 1; padding-left: 3px; }
.center > .low { height: 30px; gap: 92px; }
.draw { padding: 0 5px 0 4px; }
.draw .grip { margin-right: -6px; }
.ddb { width: 9px; justify-content: center; }
.ddb .dd { margin: 0; }
.stub { width: 31px; padding-left: 2px; background: linear-gradient(90deg, #f4f4f4, #fdfdfd); }
.cad { flex: 1; width: 100%; min-height: 0; background: #000; shape-rendering: crispEdges; overflow: hidden; }
.frame path { stroke: #3f8080; fill: none; }
.frame .edge { stroke: #0ff; }
.wall { stroke: #009696; fill: none; }
.dims { stroke: #00bfff; fill: none; }
.swing { stroke: #808080; fill: none; }
.mark { stroke: #ff0; stroke-width: 2; fill: none; shape-rendering: geometricPrecision; }
.level { stroke: #0f0; fill: none; }
.cad text { text-anchor: middle; fill: #fff; }
.num text { font: 9px "Liberation Sans", sans-serif; }
.note text { font: 12px "Noto Sans CJK SC", sans-serif; }
.note .lv { font: 10px "Liberation Sans", sans-serif; }
.cad .tag text { font: 16px "Open Sans", sans-serif; fill: #9b82ff; }
.center > .snaps { height: 36px; gap: 1px; padding: 0 0 3px; }
.snap { padding: 0 4px; }
.snap .group { margin: 0 -3px; }
.snap:first-child { padding-right: 3px; }
.shift { flex: 1; padding-left: 3px; gap: 5px; }
.shift .grip { margin-right: -3px; }
.off { width: 59px; }
.off::after { margin-left: 6px; }
.spin { display: flex; align-items: center; gap: 2px; color: #6d6d6d; }
.spin span { display: flex; align-items: center; width: 58px; height: 26px; border: 1px solid #808080; background: #f0f0f0; padding-right: 4px; margin-left: 2px; }
.spin input { flex: 1; min-width: 0; width: 20px; border: 0; background: none; text-align: right; padding: 0 10px 2px 0; }
.spin i { height: 17px; width: 5px; display: flex; flex-direction: column; justify-content: space-between; }
.spin i::before, .spin i::after { content: ""; border: 3px solid transparent; border-top: 0; border-bottom-color: #606060; margin: 0 -1px; }
.spin i::after { border-top: 3px solid #606060; border-bottom: 0; }
.center > .last { height: 13px; overflow: hidden; gap: 2px; align-items: flex-start; }
.closer svg { width: 12px; height: 12px; }
.record { flex: 1; height: 26px; margin-top: 2px; }
.navs { display: flex; align-items: center; gap: 9px; width: 147px; padding-left: 4px; }
.shut { margin-left: 10px; }

/* property editor */
.props { width: 520px; display: flex; flex-direction: column; overflow: hidden; }
.props .panelhead { border-right: 0; padding-right: 7px; }
.propbox { flex: 1; margin-top: 1px; background: #fff; border-top: 1px solid #909090; border-left: 1px solid #909090; padding: 1px 0 0 1px; overflow: hidden; }
.ptable { width: 560px; }
.ptable .no { width: 21px; }
.ptable .name { width: 121px; }
.ptable .att { width: 62px; text-align: left; padding-left: 6px; }
.ptable thead th { height: 23px; line-height: 18px; padding-bottom: 2px; }
.ptable tbody th { font: 14px/18px "Liberation Mono", monospace; height: 19px; }
.ptable td { height: 19px; line-height: 17px; padding: 0 0 1px 2px; }
.ptable th + td { padding-left: 20px; }
.ptable b { display: inline-block; font-size: 13px; line-height: 17px; vertical-align: top; }
.blue { color: #00f; }
.ptable td:last-child { padding-left: 9px; }
.ptable input { appearance: none; display: block; width: 13px; height: 13px; border: 1px solid #333; background: #fff; }
.ptable .cursel td { background: #d9e9f8; }
.ptable .cursel th + td { background: #0078d7; color: #fff; }
.ptable .cursel th { background: #ffcf80; color: #7b1040; }
.ptable .fold { padding-left: 0; color: #808080; display: flex; }
.ptable .cursel td:last-child { background: #fff; }
```
